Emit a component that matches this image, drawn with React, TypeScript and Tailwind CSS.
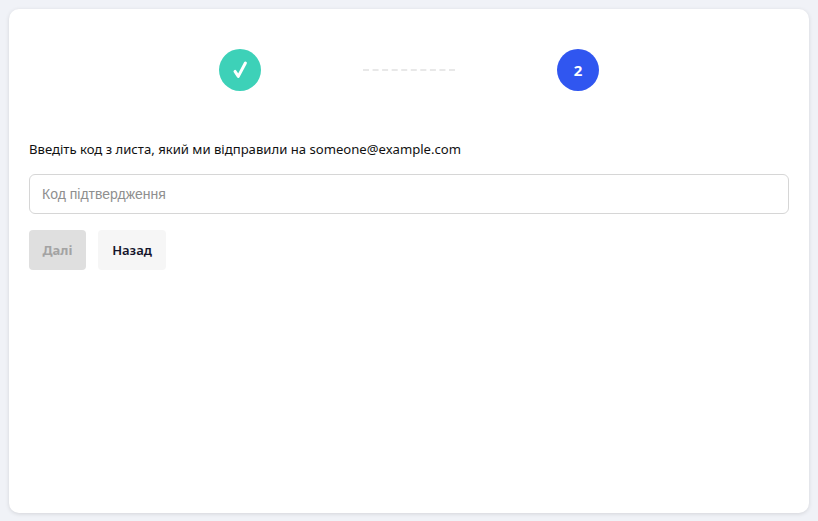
import { useState } from 'react'

export default function App() {
  const [code, setCode] = useState('')

  return (
    <div className="h-[521px] overflow-hidden bg-[#f0f2f7] p-[9px] font-['Noto_Sans','Open_Sans',sans-serif]">
      <div className="h-[504px] w-[800px] rounded-[10px] bg-white px-5 pt-10 shadow-[0_1px_4px_rgba(0,0,0,0.12)]">
        <div className="mx-auto flex w-[380px] items-center justify-between">
          <div className="flex h-[42px] w-[42px] items-center justify-center rounded-full bg-[#3dd1b8]">
            <svg width="18" height="20" viewBox="0 0 18 20" fill="none">
              <path d="M4 11.4 7.3 16.4 14.4 3" stroke="#fff" strokeWidth="3" strokeLinecap="round" strokeLinejoin="round" />
            </svg>
          </div>
          <div className="h-0 w-[92px] border-t-2 border-dashed border-[#e8e8e8]" />
          <div className="flex h-[42px] w-[42px] items-center justify-center rounded-full bg-[#3056f0] text-[15px] font-bold text-white">
            2
          </div>
        </div>

        <p className="mt-[48px] text-[13.12px] leading-[20px] text-[#111111]">
          Введіть код з листа, який ми відправили на someone@example.com
        </p>

        <input
          value={code}
          onChange={(e) => setCode(e.target.value)}
          placeholder="Код підтвердження"
          className="mt-[15px] block h-10 w-full rounded-md border border-[#d6d6d6] px-3 font-['Liberation_Sans',sans-serif] text-sm outline-none placeholder:text-[#8f8f8f]"
        />

        <div className="mt-4 flex gap-3">
          <button disabled className="h-10 w-[57px] rounded bg-[#dfdfdf] pt-px text-[13px] font-bold text-[#a3a3a3]">
            Далі
          </button>
          <button className="h-10 w-[68px] rounded bg-[#f6f6f6] pt-px text-[13px] font-semibold text-[#14142b]">
            Назад
          </button>
        </div>
      </div>
    </div>
  )
}
